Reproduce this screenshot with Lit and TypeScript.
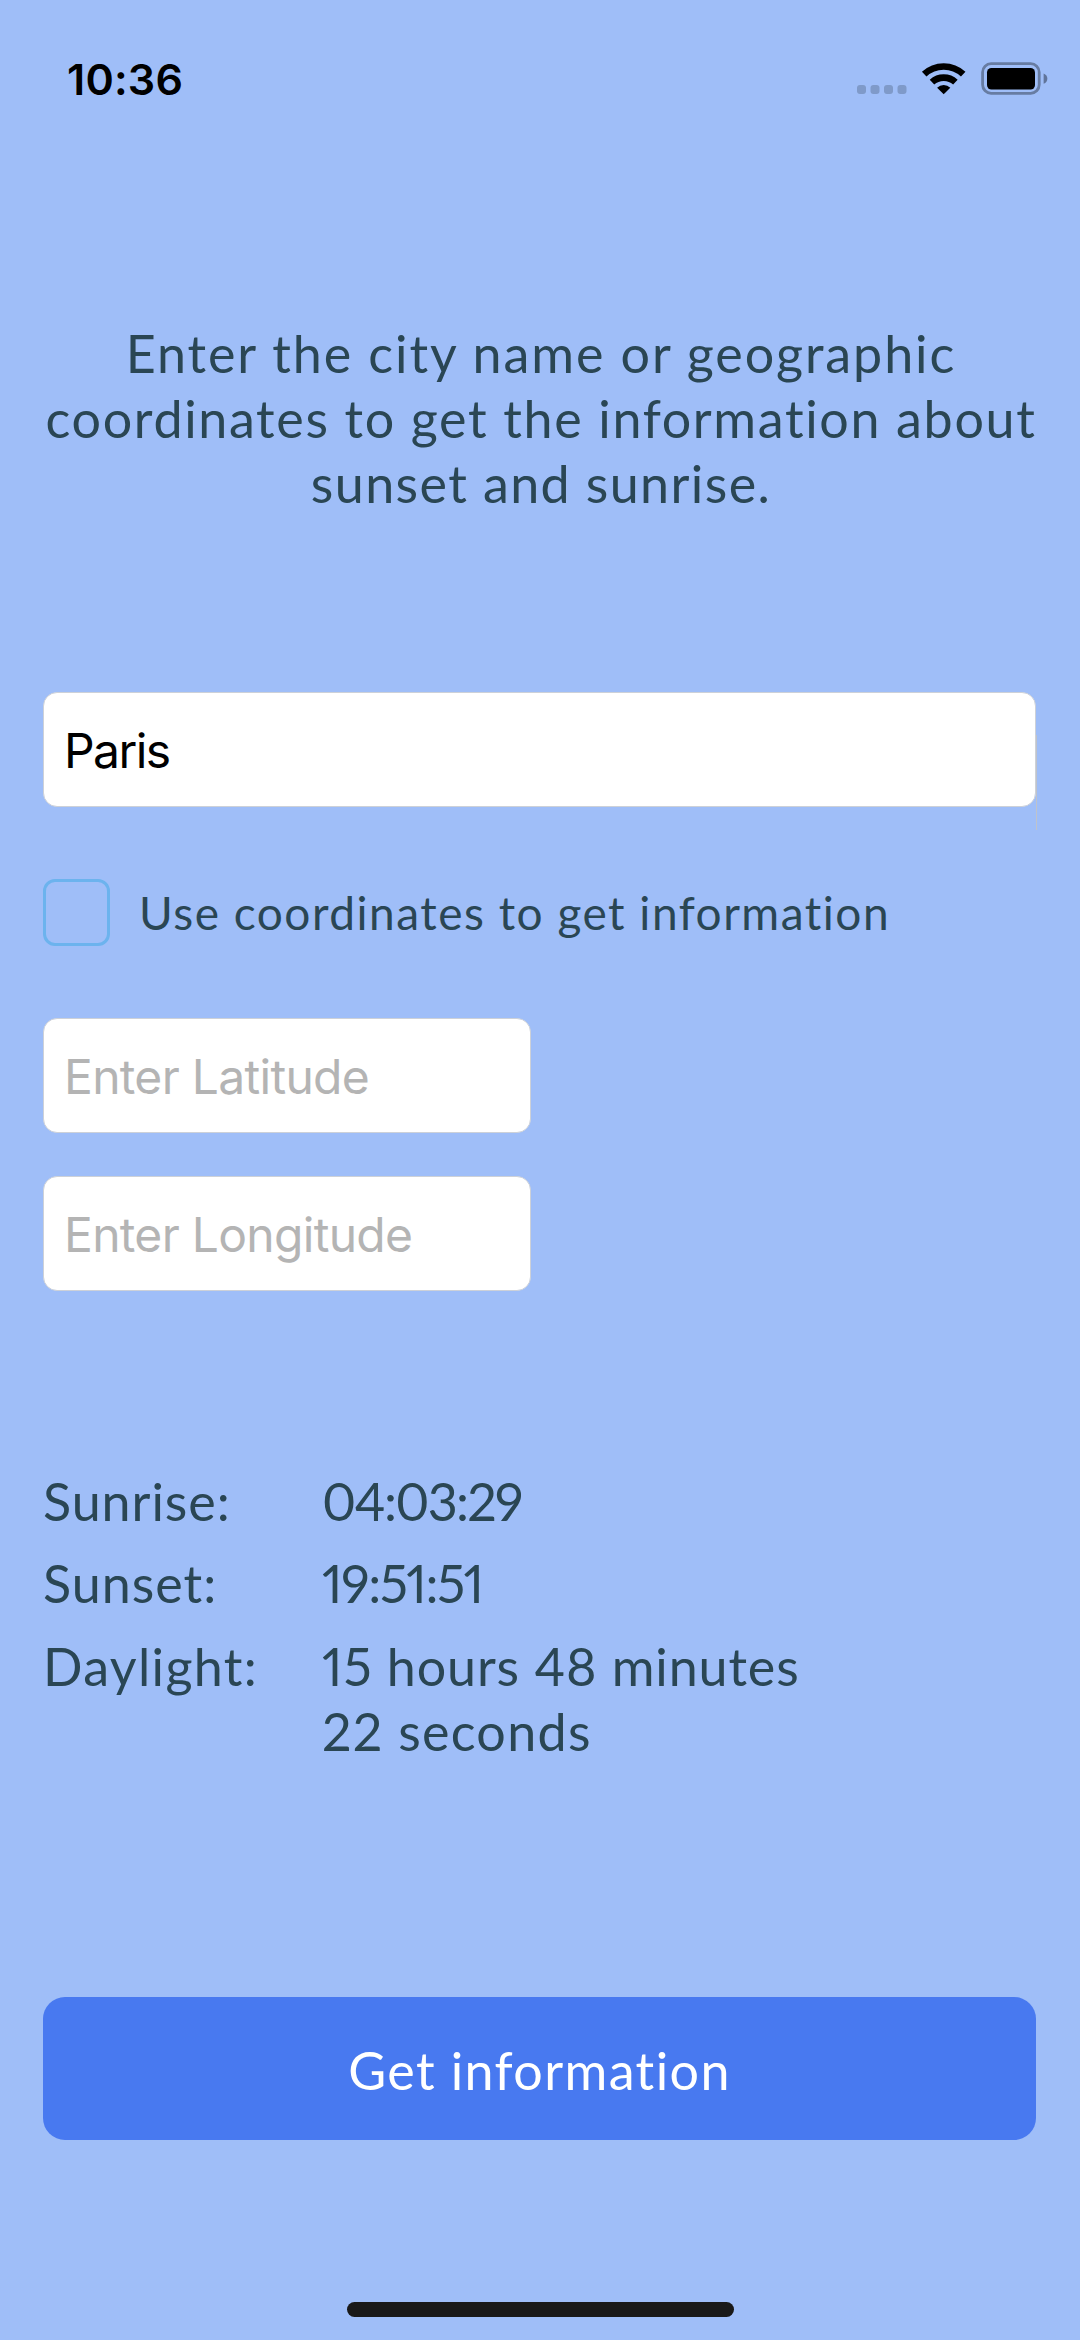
import { LitElement, html, css } from "lit";
import { customElement, property, state } from "lit/decorators.js";
import { styleMap } from "lit/directives/style-map.js";

@customElement("status-bar")
class StatusBar extends LitElement {
  static styles = css`
    :host { display: block; }
    .bar { display: flex; justify-content: space-between; height: 50px; padding: 54px 32px 0 67px; }
    .time { font: 600 43px/50px Inter, "Liberation Sans", sans-serif; letter-spacing: 0.2px; color: #000; }
    .icons { display: block; width: 192px; height: 44px; }
  `;
  render() {
    return html`<div class="bar">
      <span class="time">10:36</span>
      <svg class="icons" viewBox="856 54 192 44">
        <g fill="#7f9ac9">
          <rect x="857" y="85" width="9" height="9" rx="3" />
          <rect x="870.5" y="85" width="9" height="9" rx="3" />
          <rect x="884" y="85" width="9" height="9" rx="3" />
          <rect x="897.5" y="85" width="9" height="9" rx="3" />
        </g>
        <g fill="none" stroke="#000" stroke-width="6.6">
          <path d="M924.2 74.2 A28.5 28.5 0 0 1 963.2 74.2" />
          <path d="M932 82.2 A17.2 17.2 0 0 1 955.4 82.2" />
        </g>
        <path d="M943.7 94.2 L937.1 87.8 A9.4 9.4 0 0 1 950.3 87.8 Z" />
        <rect x="982.6" y="63.7" width="56.6" height="29.6" rx="8.5" fill="none" stroke="#677ca2" stroke-width="2.8" />
        <rect x="987" y="68" width="48" height="21.5" rx="4.5" />
        <path d="M1043.6 73.6 C1048.6 75.4 1048.6 82 1043.6 83.8 Z" fill="#60749a" />
      </svg>
    </div>`;
  }
}

@customElement("text-field")
class TextField extends LitElement {
  @property() value = "";
  @property() placeholder = "";
  static styles = css`
    :host { display: block; }
    .field {
      box-sizing: border-box; height: 115px; padding: 2px 20px 0 20px;
      border: 1px solid #cdd1d8; border-radius: 14px; background: #fff;
      font: 400 48px/111px Inter, "Liberation Sans", sans-serif;
      color: #000; white-space: nowrap;
    }
    .value { letter-spacing: -1.6px; }
    .hint { color: #b4b4b4; letter-spacing: -0.7px; }
  `;
  render() {
    return html`<div class="field">
      ${this.value
        ? html`<span class="value">${this.value}</span>`
        : html`<span class="hint">${this.placeholder}</span>`}
    </div>`;
  }
}

interface Line {
  text: string;
  tracking: number;
}

@customElement("app-root")
class AppRoot extends LitElement {
  @state() private prompt: Line[] = [
    { text: "Enter the city name or geographic", tracking: 1.9 },
    { text: "coordinates to get the information about", tracking: 1.65 },
    { text: "sunset and sunrise.", tracking: 1.4 },
  ];
  @state() private results: { label: Line; lines: Line[] }[] = [
    { label: { text: "Sunrise:", tracking: 0.95 }, lines: [{ text: "04:03:29", tracking: -1.7 }] },
    { label: { text: "Sunset:", tracking: 1 }, lines: [{ text: "19:51:51", tracking: -1.4 }] },
    {
      label: { text: "Daylight:", tracking: 1.35 },
      lines: [
        { text: "15 hours 48 minutes", tracking: 0.88 },
        { text: "22 seconds", tracking: 1.3 },
      ],
    },
  ];

  static styles = css`
    :host { display: block; }
    .screen {
      box-sizing: border-box; width: 1080px; height: 2340px; overflow: hidden;
      display: flex; flex-direction: column;
      background: #9fbef8; color: #2a4654;
      font: 400 52px/65px Lato, "Open Sans", sans-serif; white-space: nowrap;
    }
    .prompt { margin: 217px 0 0; padding-left: 2px; text-align: center; }
    .line { display: block; }
    .form { display: flex; flex-direction: column; margin: 176px 44px 0 43px; }
    .city { position: relative; }
    .caret { position: absolute; right: -1px; top: 43px; width: 1px; height: 95px; background: #bfc3cb; }
    .check { display: flex; align-items: center; gap: 29px; margin: 72px 0; height: 67px; }
    .box { box-sizing: border-box; width: 67px; height: 67px; border: 3px solid #6cb3ee; border-radius: 12px; }
    .label { font-size: 46px; letter-spacing: 1.5px; }
    .coords { display: flex; flex-direction: column; gap: 43px; width: 488px; }
    .results {
      display: grid; grid-template-columns: 279px 1fr; row-gap: 17.5px;
      margin: 177.5px 44px 0 43px; font-variant-numeric: proportional-nums;
    }
    .button {
      display: flex; justify-content: center; margin: 233.5px 44px 0 43px;
      height: 143px; border-radius: 22px; background: #4879f0; color: #fff;
      line-height: 147px; letter-spacing: 1.4px;
    }
    .home { width: 387px; height: 15px; margin: 162px 0 0 347px; border-radius: 8px; background: #191919; }
  `;

  private line(l: Line) {
    return html`<span class="line" style=${styleMap({ letterSpacing: `${l.tracking}px` })}>${l.text}</span>`;
  }

  render() {
    return html`<div class="screen">
      <status-bar></status-bar>
      <div class="prompt">${this.prompt.map((l) => this.line(l))}</div>
      <div class="form">
        <div class="city"><text-field value="Paris"></text-field><i class="caret"></i></div>
        <div class="check"><span class="box"></span><span class="label">Use coordinates to get information</span></div>
        <div class="coords">
          <text-field placeholder="Enter Latitude"></text-field>
          <text-field placeholder="Enter Longitude"></text-field>
        </div>
      </div>
      <div class="results">
        ${this.results.map((r) => html`<div>${this.line(r.label)}</div>
          <div>${r.lines.map((l) => this.line(l))}</div>`)}
      </div>
      <div class="button">Get information</div>
      <div class="home"></div>
    </div>`;
  }
}
